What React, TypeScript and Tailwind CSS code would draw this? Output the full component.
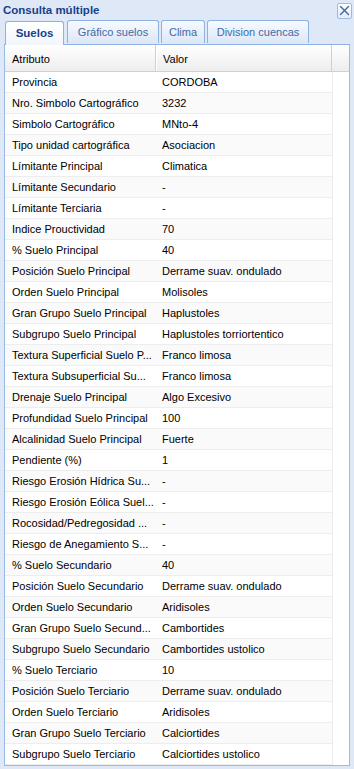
import React from "react";

const rows: [string, string][] = [
  ["Provincia", "CORDOBA"],
  ["Nro. Simbolo Cartográfico", "3232"],
  ["Simbolo Cartográfico", "MNto-4"],
  ["Tipo unidad cartográfica", "Asociacion"],
  ["Límitante Principal", "Climatica"],
  ["Límitante Secundario", "-"],
  ["Límitante Terciaria", "-"],
  ["Indice Prouctividad", "70"],
  ["% Suelo Principal", "40"],
  ["Posición Suelo Principal", "Derrame suav. ondulado"],
  ["Orden Suelo Principal", "Molisoles"],
  ["Gran Grupo Suelo Principal", "Haplustoles"],
  ["Subgrupo Suelo Principal", "Haplustoles torriortentico"],
  ["Textura Superficial Suelo P...", "Franco limosa"],
  ["Textura Subsuperficial Su...", "Franco limosa"],
  ["Drenaje Suelo Principal", "Algo Excesivo"],
  ["Profundidad Suelo Principal", "100"],
  ["Alcalinidad Suelo Principal", "Fuerte"],
  ["Pendiente (%)", "1"],
  ["Riesgo Erosión Hídrica Su...", "-"],
  ["Riesgo Erosión Eólica Suel...", "-"],
  ["Rocosidad/Pedregosidad ...", "-"],
  ["Riesgo de Anegamiento S...", "-"],
  ["% Suelo Secundario", "40"],
  ["Posición Suelo Secundario", "Derrame suav. ondulado"],
  ["Orden Suelo Secundario", "Aridisoles"],
  ["Gran Grupo Suelo Secund...", "Cambortides"],
  ["Subgrupo Suelo Secundario", "Cambortides ustolico"],
  ["% Suelo Terciario", "10"],
  ["Posición Suelo Terciario", "Derrame suav. ondulado"],
  ["Orden Suelo Terciario", "Aridisoles"],
  ["Gran Grupo Suelo Terciario", "Calciortides"],
  ["Subgrupo Suelo Terciario", "Calciortides ustolico"],
];

const tabs = [
  { label: "Suelos", active: true, w: "w-[59px] mr-[1px]" },
  { label: "Gráfico suelos", active: false, w: "w-[92px]" },
  { label: "Clima", active: false, w: "w-[44px]" },
  { label: "Division cuencas", active: false, w: "w-[102px]" },
];

function CloseButton() {
  return (
    <div className="w-[15px] h-[16px] rounded-[2px] border border-[#99bbe8] bg-gradient-to-b from-[#ffffff] to-[#e3ecf8] flex items-center justify-center">
      <svg width="11" height="11" viewBox="0 0 11 11">
        <path d="M1.5 1.5 L9.5 9.5 M9.5 1.5 L1.5 9.5" stroke="#3f66a0" strokeWidth="1.4" strokeLinecap="round" />
      </svg>
    </div>
  );
}

export default function App() {
  return (
    <div className="w-[354px] h-[769px] bg-[#dfe8f6] flex flex-col overflow-hidden font-['Liberation_Sans',Arial,sans-serif] text-[11px] text-black">
      {/* window title */}
      <div className="h-[20px] flex items-center justify-between pl-[3px] pr-[2px] pt-[1px]">
        <span className="font-bold text-[#15428b] text-[11.5px]">Consulta múltiple</span>
        <CloseButton />
      </div>

      {/* tab strip */}
      <div className="h-[25px] mx-[4px] border-b border-[#8db2e3] flex items-end gap-[2px] pl-[1px]">
        {tabs.map((t) =>
          t.active ? (
            <div
              key={t.label}
              className={`${t.w} h-[24px] -mb-px rounded-t-[3px] border border-b-0 border-[#8db2e3] bg-gradient-to-b from-[#ffffff] to-[#f2f6fc] flex items-center justify-center font-bold text-[#15428b] text-[11.5px]`}
            >
              {t.label}
            </div>
          ) : (
            <div
              key={t.label}
              className={`${t.w} h-[23px] mb-[1px] rounded-t-[3px] border border-b-0 border-[#8db2e3] bg-gradient-to-b from-[#f7faff] to-[#dce7f7] flex items-center justify-center text-[#416aa3]`}
            >
              {t.label}
            </div>
          )
        )}
      </div>

      {/* grid */}
      <div className="flex-1 mx-[4px] mb-[3px] border-x border-b border-[#99bbe8] bg-white flex flex-col overflow-hidden">
        <div className="h-[27px] shrink-0 flex bg-gradient-to-b from-[#ffffff] to-[#ededed] border-b border-[#d0d0d0]">
          <div className="w-[151px] pl-[7px] pt-[3px] flex items-center border-r border-[#d0d0d0]">Atributo</div>
          <div className="w-[176px] pl-[6px] pt-[3px] flex items-center border-r border-[#d0d0d0] border-l border-l-white">Valor</div>
          <div className="flex-1" />
        </div>
        <div className="flex flex-col">
          {rows.map(([k, v], i) => (
            <div
              key={i}
              className={`w-[328px] h-[21px] shrink-0 flex border-b border-[#ededed] border-r border-r-[#ececec] ${
                i % 2 === 1 ? "bg-[#fafafa]" : "bg-white"
              }`}
            >
              <div className="w-[152px] pl-[7px] flex items-center whitespace-nowrap overflow-hidden">{k}</div>
              <div className="flex-1 pl-[5px] flex items-center whitespace-nowrap overflow-hidden">{v}</div>
            </div>
          ))}
        </div>
      </div>
    </div>
  );
}
